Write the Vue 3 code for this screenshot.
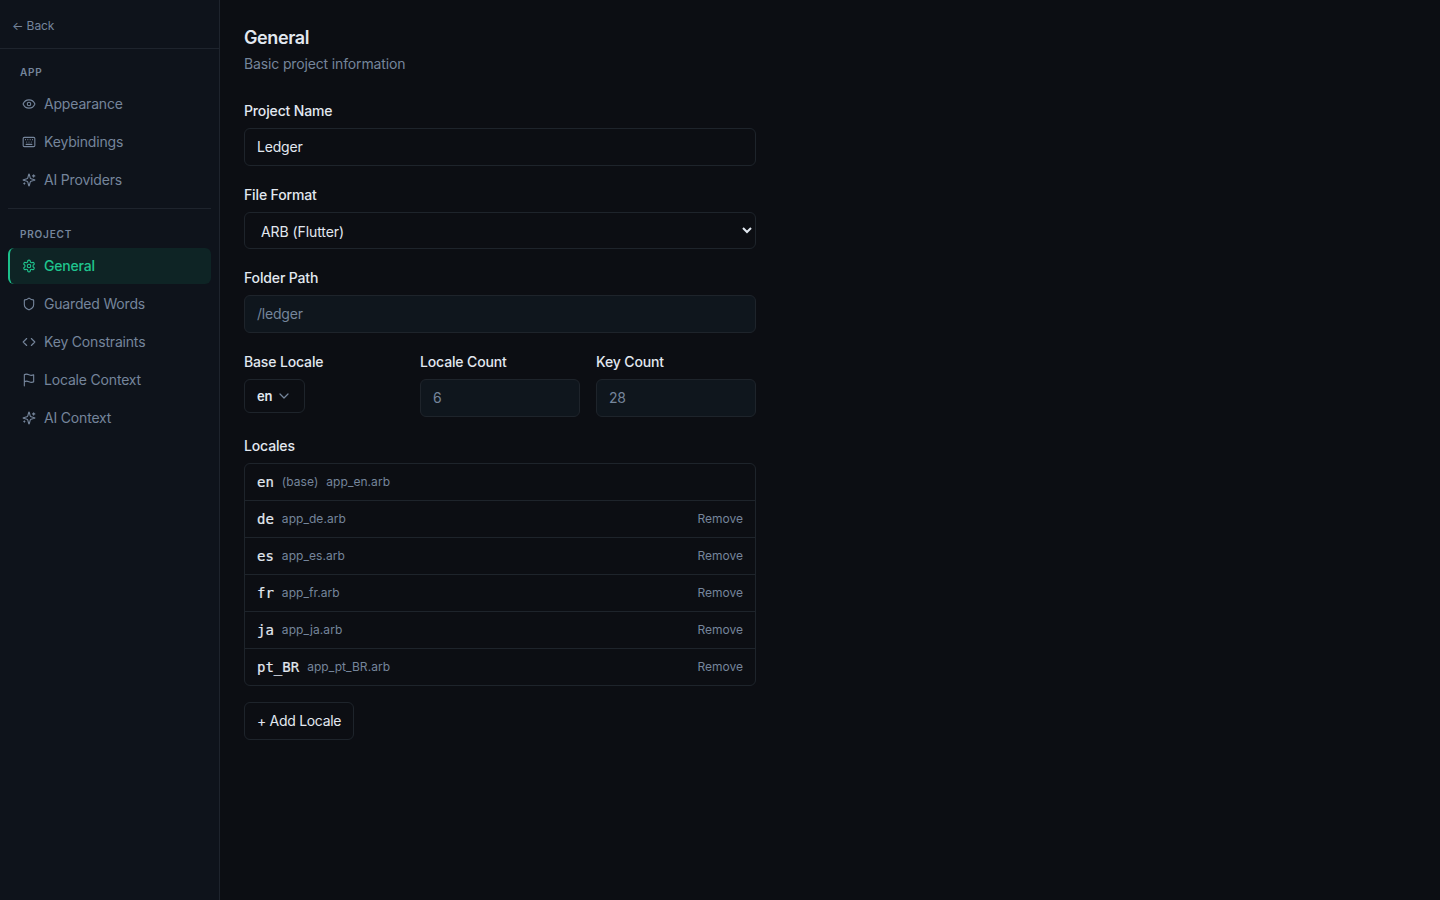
<script setup>
import { ref } from 'vue'

const active = ref('general')

const sections = [
  {
    title: 'App',
    items: [
      { id: 'appearance', label: 'Appearance', icon: 'eye' },
      { id: 'keybindings', label: 'Keybindings', icon: 'keyboard' },
      { id: 'providers', label: 'AI Providers', icon: 'sparkles' },
    ],
  },
  {
    title: 'Project',
    items: [
      { id: 'general', label: 'General', icon: 'gear' },
      { id: 'guarded', label: 'Guarded Words', icon: 'shield' },
      { id: 'constraints', label: 'Key Constraints', icon: 'code' },
      { id: 'locale', label: 'Locale Context', icon: 'flag' },
      { id: 'context', label: 'AI Context', icon: 'sparkles' },
    ],
  },
]

// 24x24 stroke icons
const icons = {
  eye: [
    'M2.06 12.35a1 1 0 0 1 0-.7 10.75 10.75 0 0 1 19.88 0 1 1 0 0 1 0 .7 10.75 10.75 0 0 1-19.88 0',
    'M15 12a3 3 0 1 1-6 0 3 3 0 0 1 6 0Z',
  ],
  keyboard: [
    'M4 4h16a2 2 0 0 1 2 2v12a2 2 0 0 1-2 2H4a2 2 0 0 1-2-2V6a2 2 0 0 1 2-2Z',
    'M6 8h.01M10 8h.01M14 8h.01M18 8h.01M8 12h.01M12 12h.01M16 12h.01M7 16h10',
  ],
  sparkles: [
    'M9.94 15.5A2 2 0 0 0 8.5 14.06l-6.14-1.58a.5.5 0 0 1 0-.96L8.5 9.94A2 2 0 0 0 9.94 8.5l1.58-6.14a.5.5 0 0 1 .96 0l1.58 6.14a2 2 0 0 0 1.44 1.44l6.14 1.58a.5.5 0 0 1 0 .96l-6.14 1.58a2 2 0 0 0-1.44 1.44l-1.58 6.14a.5.5 0 0 1-.96 0z',
    'M20 3v4M22 5h-4M4 17v2M5 18H3',
  ],
  gear: [
    'M12.22 2h-.44a2 2 0 0 0-2 2v.18a2 2 0 0 1-1 1.73l-.43.25a2 2 0 0 1-2 0l-.15-.08a2 2 0 0 0-2.73.73l-.22.38a2 2 0 0 0 .73 2.73l.15.1a2 2 0 0 1 1 1.72v.51a2 2 0 0 1-1 1.74l-.15.09a2 2 0 0 0-.73 2.73l.22.38a2 2 0 0 0 2.73.73l.15-.08a2 2 0 0 1 2 0l.43.25a2 2 0 0 1 1 1.73V20a2 2 0 0 0 2 2h.44a2 2 0 0 0 2-2v-.18a2 2 0 0 1 1-1.73l.43-.25a2 2 0 0 1 2 0l.15.08a2 2 0 0 0 2.73-.73l.22-.39a2 2 0 0 0-.73-2.73l-.15-.08a2 2 0 0 1-1-1.74v-.5a2 2 0 0 1 1-1.74l.15-.09a2 2 0 0 0 .73-2.73l-.22-.38a2 2 0 0 0-2.73-.73l-.15.08a2 2 0 0 1-2 0l-.43-.25a2 2 0 0 1-1-1.73V4a2 2 0 0 0-2-2z',
    'M15 12a3 3 0 1 1-6 0 3 3 0 0 1 6 0Z',
  ],
  shield: [
    'M20 13c0 5-3.5 7.5-7.66 8.95a1 1 0 0 1-.67-.01C7.5 20.5 4 18 4 13V6a1 1 0 0 1 1-1c2 0 4.5-1.2 6.24-2.72a1.17 1.17 0 0 1 1.52 0C14.51 3.81 17 5 19 5a1 1 0 0 1 1 1z',
  ],
  code: ['m16 18 6-6-6-6M8 6l-6 6 6 6'],
  flag: ['M4 15s1-1 4-1 5 2 8 2 4-1 4-1V3s-1 1-4 1-5-2-8-2-4 1-4 1zM4 22v-7'],
}

const projectName = ref('Ledger')
const format = ref('arb')

const locales = [
  { code: 'en', file: 'app_en.arb', base: true },
  { code: 'de', file: 'app_de.arb' },
  { code: 'es', file: 'app_es.arb' },
  { code: 'fr', file: 'app_fr.arb' },
  { code: 'ja', file: 'app_ja.arb' },
  { code: 'pt_BR', file: 'app_pt_BR.arb' },
]
</script>

<template>
  <div class="layout">
    <aside class="sidebar">
      <div class="sidebar-head">
        <button class="back">← Back</button>
      </div>
      <nav>
        <div v-for="s in sections" :key="s.title" class="section">
          <div class="section-title">{{ s.title }}</div>
          <button
            v-for="item in s.items"
            :key="item.id"
            class="nav-item"
            :class="{ active: active === item.id }"
            @click="active = item.id"
          >
            <svg class="icon" viewBox="0 0 24 24">
              <path v-for="d in icons[item.icon]" :key="d" :d="d" />
            </svg>
            {{ item.label }}
          </button>
        </div>
      </nav>
    </aside>

    <main class="content">
      <h2>General</h2>
      <p class="subtitle">Basic project information</p>

      <div class="form">
        <div class="field">
          <label>Project Name</label>
          <input v-model="projectName" class="input" type="text" />
        </div>
        <div class="field">
          <label>File Format</label>
          <select v-model="format" class="input select">
            <option value="arb">ARB (Flutter)</option>
          </select>
        </div>
        <div class="field">
          <label>Folder Path</label>
          <div class="input readonly">/ledger</div>
        </div>
        <div class="row">
          <div class="field">
            <label>Base Locale</label>
            <button class="dropdown">
              en
              <svg class="chevron" viewBox="0 0 24 24"><path d="m6 9 6 6 6-6" /></svg>
            </button>
          </div>
          <div class="field">
            <label>Locale Count</label>
            <div class="input readonly">{{ locales.length }}</div>
          </div>
          <div class="field">
            <label>Key Count</label>
            <div class="input readonly">28</div>
          </div>
        </div>
        <div class="field">
          <label>Locales</label>
          <div class="locales">
            <div v-for="l in locales" :key="l.code" class="locale">
              <span class="code">{{ l.code }}</span>
              <span v-if="l.base" class="muted">(base)</span>
              <span class="muted">{{ l.file }}</span>
              <button v-if="!l.base" class="remove">Remove</button>
            </div>
          </div>
          <button class="add">+ Add Locale</button>
        </div>
      </div>
    </main>
  </div>
</template>

<style>
body {
  margin: 0;
  background: #0c0e13;
}
</style>

<style scoped>
.layout {
  display: flex;
  height: 100vh;
  overflow: hidden;
  background: #0c0e13;
  color: #e2e8f0;
  font-family: Inter, 'Liberation Sans', sans-serif;
  font-size: 14px;
  line-height: 20px;
  letter-spacing: -0.14px;
}
.layout * {
  box-sizing: border-box;
}
button {
  font: inherit;
  letter-spacing: inherit;
  color: inherit;
  background: none;
  border: none;
  padding: 0;
  margin: 0;
}
.sidebar {
  width: 220px;
  flex-shrink: 0;
  background: #0e131b;
  border-right: 1px solid #1e242d;
}
.sidebar-head {
  height: 49px;
  padding: 18px 12px 14px;
  border-bottom: 1px solid #1e242d;
}
.back {
  display: block;
  font-size: 12px;
  line-height: 16px;
  letter-spacing: -0.1px;
  color: #75859b;
}
nav {
  padding: 8px 8px 0;
}
.section {
  display: flex;
  flex-direction: column;
  gap: 2px;
}
.section + .section {
  margin-top: 10px;
  padding-top: 10px;
  border-top: 1px solid #1e242d;
}
.section-title {
  height: 27px;
  padding: 8px 12px 4px;
  font-size: 10px;
  line-height: 15px;
  font-weight: 600;
  letter-spacing: 0.8px;
  text-transform: uppercase;
  color: #75859b;
}
.nav-item {
  display: flex;
  align-items: center;
  gap: 8px;
  height: 36px;
  padding: 0 12px;
  border-left: 2px solid transparent;
  border-radius: 6px;
  color: #75859b;
  letter-spacing: -0.18px;
  text-align: left;
}
.nav-item.active {
  background: #0e2425;
  border-left-color: #1cc08b;
  color: #1fc48e;
  font-weight: 500;
}
.icon {
  width: 14px;
  height: 14px;
  fill: none;
  stroke: currentColor;
  stroke-width: 1.9;
  stroke-linecap: round;
  stroke-linejoin: round;
}
.content {
  flex: 1;
  padding: 24px;
}
h2 {
  margin: 0 0 2px;
  font-size: 18px;
  line-height: 28px;
  font-weight: 600;
  letter-spacing: -0.4px;
}
.subtitle {
  margin: 0 0 27px;
  color: #75859b;
}
.form {
  display: flex;
  flex-direction: column;
  gap: 19px;
  width: 512px;
}
.field {
  display: flex;
  flex-direction: column;
  align-items: flex-start;
}
label {
  margin-bottom: 7px;
  font-weight: 500;
}
.input {
  width: 100%;
  height: 38px;
  padding: 8px 12px;
  border: 1px solid #1e242b;
  border-radius: 6px;
  background: #0c0e13;
  color: #e2e8f0;
  font: inherit;
  letter-spacing: -0.2px;
  outline: none;
}
input.input {
  padding: 7px 12px 9px;
}
.input.readonly {
  background: #0f161d;
  color: #75859b;
}
.select {
  height: 37px;
  padding: 9px 12px 7px;
  letter-spacing: -0.08px;
}
.row {
  display: grid;
  grid-template-columns: repeat(3, 1fr);
  gap: 16px;
}
.dropdown {
  display: flex;
  align-items: center;
  gap: 4px;
  width: 61px;
  height: 34px;
  padding: 0 12px;
  border: 1px solid #1e242b;
  border-radius: 6px;
  font-size: 13px;
  font-weight: 600;
}
.chevron {
  width: 16px;
  height: 16px;
  flex-shrink: 0;
  fill: none;
  stroke: #75859b;
  stroke-width: 1.8;
  stroke-linecap: round;
  stroke-linejoin: round;
}
.locales {
  width: 100%;
  border: 1px solid #1e242b;
  border-radius: 6px;
}
.locale {
  display: flex;
  align-items: center;
  gap: 8px;
  height: 36px;
  padding: 0 12px;
}
.locale + .locale {
  height: 37px;
  border-top: 1px solid #1e242b;
}
.code {
  font-family: 'DejaVu Sans Mono', monospace;
  letter-spacing: 0;
  -webkit-text-stroke: 0.2px;
}
.muted,
.remove {
  font-size: 12px;
  line-height: 16px;
  letter-spacing: 0.05px;
  color: #75859b;
}
.remove {
  margin-left: auto;
  letter-spacing: 0;
}
.add {
  width: 110px;
  height: 38px;
  margin-top: 16px;
  padding: 0 12px;
  border: 1px solid #1e242b;
  border-radius: 6px;
  letter-spacing: -0.3px;
  white-space: nowrap;
}
</style>
